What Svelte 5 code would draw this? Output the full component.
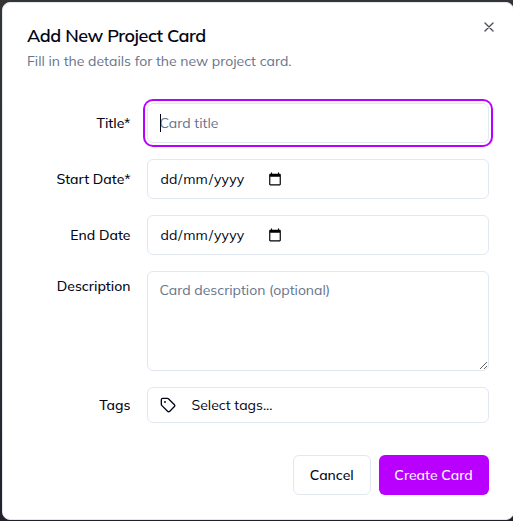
<script>
  const dates = [
    { id: 'start', label: 'Start Date*' },
    { id: 'end', label: 'End Date' }
  ];
</script>

<div class="backdrop">
  <div class="dialog" role="dialog" aria-labelledby="heading">
    <header>
      <h2 id="heading">Add New Project Card</h2>
      <p>Fill in the details for the new project card.</p>
    </header>

    <button class="close" aria-label="Close">
      <svg width="16" height="16" viewBox="0 0 24 24" fill="none" stroke="currentColor" stroke-width="2" stroke-linecap="round" stroke-linejoin="round"><path d="M18 6 6 18M6 6l12 12" /></svg>
    </button>

    <form>
      <div class="row">
        <label for="title">Title*</label>
        <div class="control focused">
          <input id="title" placeholder="Card title" />
          <span class="caret"></span>
        </div>
      </div>

      {#each dates as date (date.id)}
        <div class="row">
          <span class="label">{date.label}</span>
          <div class="control date">
            <span class="mask"><span>dd</span>/<span>mm</span>/<span>yyyy</span></span>
            <svg width="14" height="14" viewBox="0 0 24 24" fill="#000"><path d="M20 3h-1V1h-2v2H7V1H5v2H4c-1.1 0-2 .9-2 2v16c0 1.1.9 2 2 2h16c1.1 0 2-.9 2-2V5c0-1.1-.9-2-2-2zm0 18H4V8h16v13z" /></svg>
          </div>
        </div>
      {/each}

      <div class="row top">
        <label for="description">Description</label>
        <textarea id="description" placeholder="Card description (optional)"></textarea>
      </div>

      <div class="row">
        <span class="label">Tags</span>
        <button type="button" class="control tags">
          <svg width="16" height="16" viewBox="0 0 24 24" fill="none" stroke="currentColor" stroke-width="2" stroke-linecap="round" stroke-linejoin="round"><path d="M12.586 2.586A2 2 0 0 0 11.172 2H4a2 2 0 0 0-2 2v7.172a2 2 0 0 0 .586 1.414l8.704 8.704a2.426 2.426 0 0 0 3.42 0l6.58-6.58a2.426 2.426 0 0 0 0-3.42z" /><circle cx="7.5" cy="7.5" r=".5" fill="currentColor" /></svg>
          <span>Select tags...</span>
        </button>
      </div>
    </form>

    <footer>
      <button class="cancel">Cancel</button>
      <button class="create">Create Card</button>
    </footer>
  </div>
</div>

<style>
  :global(body) { overflow: hidden; background: #333132; }
  * { box-sizing: border-box; }
  .backdrop {
    width: 513px;
    height: 521px;
    padding: 2px 0 0 1.5px;
    overflow: hidden;
    background: linear-gradient(#353334, #302f31 60%, #22212a);
    font-family: Mulish, Lato, "Open Sans", sans-serif;
    font-size: 14px;
    line-height: 20px;
    color: #020617;
  }
  .dialog {
    position: relative;
    width: 512px;
    height: 518px;
    padding: 24px;
    border: 1px solid #e2e8f0;
    border-radius: 8px;
    background: #fff;
  }
  header { height: 44px; padding-left: 0.5px; }
  h2 {
    margin: 0;
    font-size: 18px;
    font-weight: 600;
    line-height: 18px;
    letter-spacing: -0.45px;
  }
  p { margin: 6px 0 0; color: #64748b; }
  button, input, textarea { font: inherit; color: inherit; }
  .close {
    position: absolute;
    top: 16px;
    right: 16px;
    width: 16px;
    height: 16px;
    padding: 0;
    border: 0;
    background: none;
    opacity: 0.7;
  }
  .close svg { display: block; }
  form {
    display: flex;
    flex-direction: column;
    gap: 16px;
    padding-top: 32px;
  }
  .row {
    display: grid;
    grid-template-columns: 104px 342px;
    gap: 16px;
    align-items: center;
  }
  label, .label { text-align: right; white-space: nowrap; font-weight: 500; }
  .top { align-items: start; }
  .top label { padding-top: 5px; }
  .control {
    position: relative;
    display: flex;
    align-items: center;
    height: 40px;
    border: 1px solid #e2e8f0;
    border-radius: 6px;
    background: #fff;
  }
  .focused { box-shadow: 0 0 0 2px #fff, 0 0 0 4px #b900ff; }
  input {
    width: 100%;
    height: 38px;
    padding: 0 12px;
    border: 0;
    outline: 0;
    background: transparent;
  }
  ::placeholder { color: #64748b; opacity: 1; }
  .caret {
    position: absolute;
    left: 12px;
    top: 10px;
    width: 1px;
    height: 18px;
    background: #020617;
  }
  .date { padding: 0 12px; }
  .mask { width: 108px; }
  .mask span { padding: 0 1px; }
  textarea {
    display: block;
    width: 342px;
    height: 100px;
    padding: 8px 12px;
    border: 1px solid #e2e8f0;
    border-radius: 6px;
    outline: 0;
    resize: vertical;
    background: #fff;
  }
  .tags { height: 36px; padding: 0 12px; gap: 16px; text-align: left; }
  footer {
    display: flex;
    justify-content: flex-end;
    gap: 8px;
    margin-top: 32px;
  }
  footer button {
    height: 40px;
    padding: 0;
    border: 1px solid #e2e8f0;
    border-radius: 6px;
    background: #fff;
    font-weight: 500;
  }
  footer .cancel { width: 78px; padding-left: 0.5px; }
  footer .create { width: 110px; border: 0; background: #b900ff; color: #f8fafc; }
</style>
